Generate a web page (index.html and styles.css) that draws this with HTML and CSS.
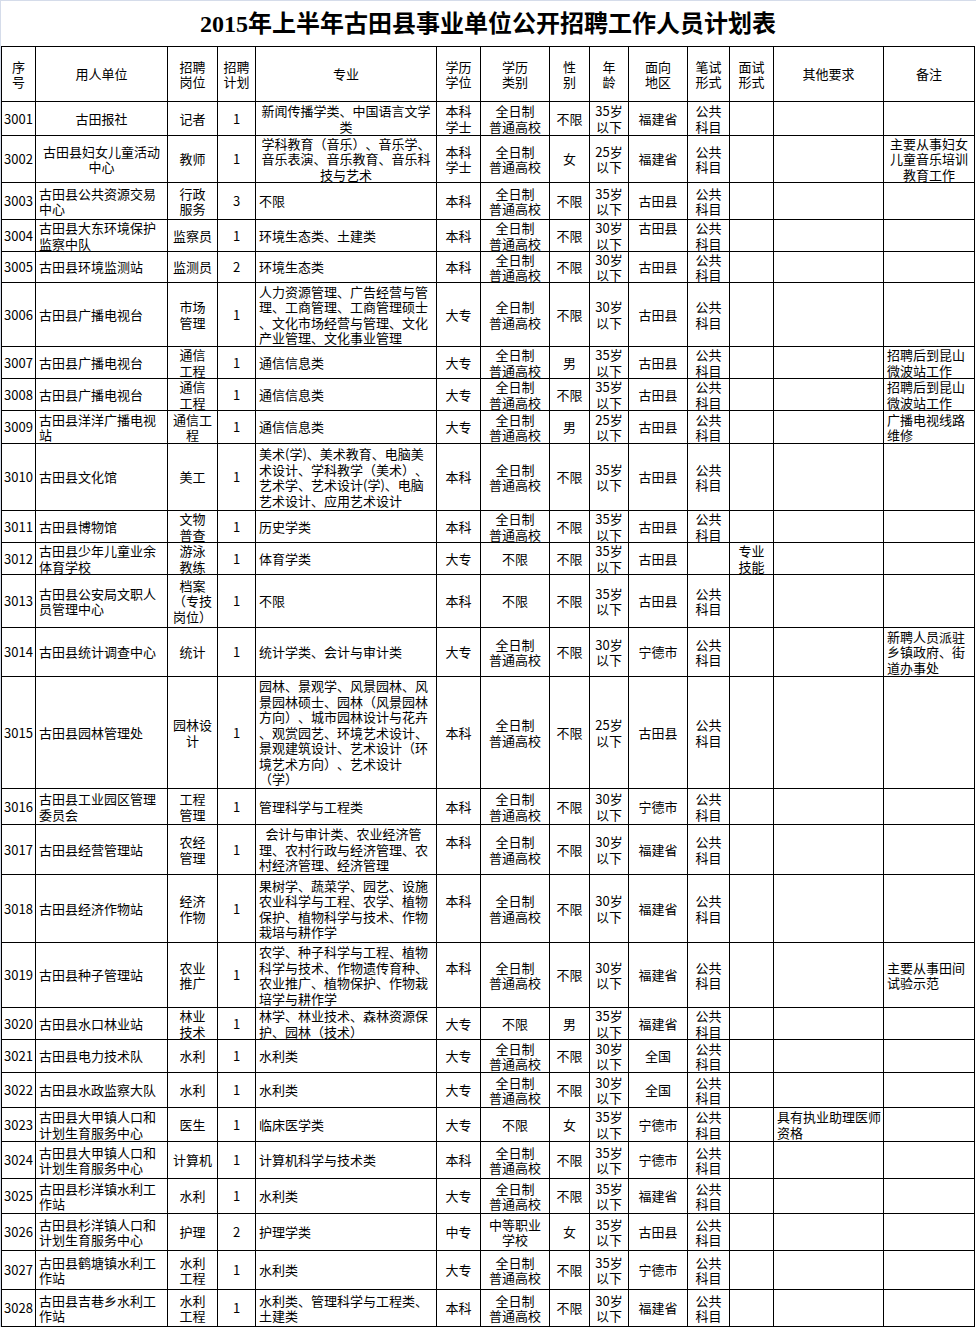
FILE: index.html
```html
<!DOCTYPE html>
<html lang="zh-CN">
<head>
<meta charset="utf-8">
<title>2015年上半年古田县事业单位公开招聘工作人员计划表</title>
<link rel="stylesheet" href="styles.css">
</head>
<body>
<div class="sheet">
<div class="title">2015年上半年古田县事业单位公开招聘工作人员计划表</div>
<div class="grid">
<div class="r hd"><div>序
号</div><div>用人单位</div><div>招聘
岗位</div><div>招聘
计划</div><div>专业</div><div>学历
学位</div><div>学历
类别</div><div>性
别</div><div>年
龄</div><div>面向
地区</div><div>笔试
形式</div><div>面试
形式</div><div>其他要求</div><div>备注</div></div>
<div class="r"><div>3001</div><div>古田报社</div><div>记者</div><div>1</div><div>新闻传播学类、中国语言文学
类</div><div>本科
学士</div><div>全日制
普通高校</div><div>不限</div><div>35岁
以下</div><div>福建省</div><div>公共
科目</div><div></div><div class="l"></div><div class="l"></div></div>
<div class="r"><div>3002</div><div>古田县妇女儿童活动
中心</div><div>教师</div><div>1</div><div>学科教育（音乐）、音乐学、
音乐表演、音乐教育、音乐科
技与艺术</div><div>本科
学士</div><div>全日制
普通高校</div><div>女</div><div>25岁
以下</div><div>福建省</div><div>公共
科目</div><div></div><div class="l"></div><div>主要从事妇女
儿童音乐培训
教育工作</div></div>
<div class="r"><div>3003</div><div class="l">古田县公共资源交易
中心</div><div>行政
服务</div><div>3</div><div class="l">不限</div><div>本科</div><div>全日制
普通高校</div><div>不限</div><div>35岁
以下</div><div>古田县</div><div>公共
科目</div><div></div><div class="l"></div><div class="l"></div></div>
<div class="r"><div>3004</div><div class="l">古田县大东环境保护
监察中队</div><div>监察员</div><div>1</div><div class="l">环境生态类、土建类</div><div>本科</div><div>全日制
普通高校</div><div>不限</div><div>30岁
以下</div><div class="t">古田县</div><div>公共
科目</div><div></div><div class="l"></div><div class="l"></div></div>
<div class="r"><div>3005</div><div class="l">古田县环境监测站</div><div>监测员</div><div>2</div><div class="l">环境生态类</div><div>本科</div><div>全日制
普通高校</div><div>不限</div><div>30岁
以下</div><div>古田县</div><div>公共
科目</div><div></div><div class="l"></div><div class="l"></div></div>
<div class="r"><div>3006</div><div class="l">古田县广播电视台</div><div>市场
管理</div><div>1</div><div class="l">人力资源管理、广告经营与管
理、工商管理、工商管理硕士
、文化市场经营与管理、文化
产业管理、文化事业管理</div><div>大专</div><div>全日制
普通高校</div><div>不限</div><div>30岁
以下</div><div>古田县</div><div>公共
科目</div><div></div><div class="l"></div><div class="l"></div></div>
<div class="r"><div>3007</div><div class="l">古田县广播电视台</div><div>通信
工程</div><div>1</div><div class="l">通信信息类</div><div>大专</div><div>全日制
普通高校</div><div>男</div><div>35岁
以下</div><div>古田县</div><div>公共
科目</div><div></div><div class="l"></div><div class="l">招聘后到昆山
微波站工作</div></div>
<div class="r"><div>3008</div><div class="l">古田县广播电视台</div><div>通信
工程</div><div>1</div><div class="l">通信信息类</div><div>大专</div><div>全日制
普通高校</div><div>不限</div><div>35岁
以下</div><div>古田县</div><div>公共
科目</div><div></div><div class="l"></div><div class="l">招聘后到昆山
微波站工作</div></div>
<div class="r"><div>3009</div><div class="l">古田县洋洋广播电视
站</div><div>通信工
程</div><div>1</div><div class="l">通信信息类</div><div>大专</div><div>全日制
普通高校</div><div>男</div><div>25岁
以下</div><div>古田县</div><div>公共
科目</div><div></div><div class="l"></div><div class="l">广播电视线路
维修</div></div>
<div class="r"><div>3010</div><div class="l">古田县文化馆</div><div>美工</div><div>1</div><div class="l">美术(学)、美术教育、电脑美
术设计、学科教学（美术）、
艺术学、艺术设计(学)、电脑
艺术设计、应用艺术设计</div><div>本科</div><div>全日制
普通高校</div><div>不限</div><div>35岁
以下</div><div>古田县</div><div>公共
科目</div><div></div><div class="l"></div><div class="l"></div></div>
<div class="r"><div>3011</div><div class="l">古田县博物馆</div><div>文物
普查</div><div>1</div><div class="l">历史学类</div><div>本科</div><div>全日制
普通高校</div><div>不限</div><div>35岁
以下</div><div>古田县</div><div>公共
科目</div><div></div><div class="l"></div><div class="l"></div></div>
<div class="r"><div>3012</div><div class="l">古田县少年儿童业余
体育学校</div><div>游泳
教练</div><div>1</div><div class="l">体育学类</div><div>大专</div><div>不限</div><div>不限</div><div>35岁
以下</div><div>古田县</div><div></div><div>专业
技能</div><div class="l"></div><div class="l"></div></div>
<div class="r"><div>3013</div><div class="l">古田县公安局文职人
员管理中心</div><div>档案
（专技
岗位）</div><div>1</div><div class="l">不限</div><div>本科</div><div>不限</div><div>不限</div><div>35岁
以下</div><div>古田县</div><div>公共
科目</div><div></div><div class="l"></div><div class="l"></div></div>
<div class="r"><div>3014</div><div class="l">古田县统计调查中心</div><div>统计</div><div>1</div><div class="l">统计学类、会计与审计类</div><div>大专</div><div>全日制
普通高校</div><div>不限</div><div>30岁
以下</div><div>宁德市</div><div>公共
科目</div><div></div><div class="l"></div><div class="l">新聘人员派驻
乡镇政府、街
道办事处</div></div>
<div class="r"><div>3015</div><div class="l">古田县园林管理处</div><div>园林设
计</div><div>1</div><div class="l">园林、景观学、风景园林、风
景园林硕士、园林（风景园林
方向）、城市园林设计与花卉
、观赏园艺、环境艺术设计、
景观建筑设计、艺术设计（环
境艺术方向）、艺术设计
（学）</div><div>本科</div><div>全日制
普通高校</div><div>不限</div><div>25岁
以下</div><div>古田县</div><div>公共
科目</div><div></div><div class="l"></div><div class="l"></div></div>
<div class="r"><div>3016</div><div class="l">古田县工业园区管理
委员会</div><div>工程
管理</div><div>1</div><div class="l">管理科学与工程类</div><div>本科</div><div>全日制
普通高校</div><div>不限</div><div>30岁
以下</div><div>宁德市</div><div>公共
科目</div><div></div><div class="l"></div><div class="l"></div></div>
<div class="r"><div>3017</div><div class="l">古田县经营管理站</div><div>农经
管理</div><div>1</div><div class="l">&ensp;会计与审计类、农业经济管
理、农村行政与经济管理、农
村经济管理、经济管理</div><div>本科
&nbsp;</div><div>全日制
普通高校</div><div>不限</div><div>30岁
以下</div><div>福建省</div><div>公共
科目</div><div></div><div class="l"></div><div class="l"></div></div>
<div class="r"><div>3018</div><div class="l">古田县经济作物站</div><div>经济
作物</div><div>1</div><div class="l">果树学、蔬菜学、园艺、设施
农业科学与工程、农学、植物
保护、植物科学与技术、作物
栽培与耕作学</div><div>本科
&nbsp;</div><div>全日制
普通高校</div><div>不限</div><div>30岁
以下</div><div>福建省</div><div>公共
科目</div><div></div><div class="l"></div><div class="l"></div></div>
<div class="r"><div>3019</div><div class="l">古田县种子管理站</div><div>农业
推广</div><div>1</div><div class="l">农学、种子科学与工程、植物
科学与技术、作物遗传育种、
农业推广、植物保护、作物栽
培学与耕作学</div><div>本科
&nbsp;</div><div>全日制
普通高校</div><div>不限</div><div>30岁
以下</div><div>福建省</div><div>公共
科目</div><div></div><div class="l"></div><div class="l">主要从事田间
试验示范</div></div>
<div class="r"><div>3020</div><div class="l">古田县水口林业站</div><div>林业
技术</div><div>1</div><div class="l">林学、林业技术、森林资源保
护、园林（技术）</div><div>大专</div><div>不限</div><div>男</div><div>35岁
以下</div><div>福建省</div><div>公共
科目</div><div></div><div class="l"></div><div class="l"></div></div>
<div class="r"><div>3021</div><div class="l">古田县电力技术队</div><div>水利</div><div>1</div><div class="l">水利类</div><div>大专</div><div>全日制
普通高校</div><div>不限</div><div>30岁
以下</div><div>全国</div><div>公共
科目</div><div></div><div class="l"></div><div class="l"></div></div>
<div class="r"><div>3022</div><div class="l">古田县水政监察大队</div><div>水利</div><div>1</div><div class="l">水利类</div><div>大专</div><div>全日制
普通高校</div><div>不限</div><div>30岁
以下</div><div>全国</div><div>公共
科目</div><div></div><div class="l"></div><div class="l"></div></div>
<div class="r"><div>3023</div><div class="l">古田县大甲镇人口和
计划生育服务中心</div><div>医生</div><div>1</div><div class="l">临床医学类</div><div>大专</div><div>不限</div><div>女</div><div>35岁
以下</div><div>宁德市</div><div>公共
科目</div><div></div><div class="l">具有执业助理医师
资格</div><div class="l"></div></div>
<div class="r"><div>3024</div><div class="l">古田县大甲镇人口和
计划生育服务中心</div><div>计算机</div><div>1</div><div class="l">计算机科学与技术类</div><div>本科</div><div>全日制
普通高校</div><div>不限</div><div>35岁
以下</div><div>宁德市</div><div>公共
科目</div><div></div><div class="l"></div><div class="l"></div></div>
<div class="r"><div>3025</div><div class="l">古田县杉洋镇水利工
作站</div><div>水利</div><div>1</div><div class="l">水利类</div><div>大专</div><div>全日制
普通高校</div><div>不限</div><div>35岁
以下</div><div>福建省</div><div>公共
科目</div><div></div><div class="l"></div><div class="l"></div></div>
<div class="r"><div>3026</div><div class="l">古田县杉洋镇人口和
计划生育服务中心</div><div>护理</div><div>2</div><div class="l">护理学类</div><div>中专</div><div>中等职业
学校</div><div>女</div><div>35岁
以下</div><div>古田县</div><div>公共
科目</div><div></div><div class="l"></div><div class="l"></div></div>
<div class="r"><div>3027</div><div class="l">古田县鹤塘镇水利工
作站</div><div>水利
工程</div><div>1</div><div class="l">水利类</div><div>大专</div><div>全日制
普通高校</div><div>不限</div><div>35岁
以下</div><div>宁德市</div><div>公共
科目</div><div></div><div class="l"></div><div class="l"></div></div>
<div class="r"><div>3028</div><div class="l">古田县吉巷乡水利工
作站</div><div>水利
工程</div><div>1</div><div class="l">水利类、管理科学与工程类、
土建类</div><div>本科</div><div>全日制
普通高校</div><div>不限</div><div>30岁
以下</div><div>福建省</div><div>公共
科目</div><div></div><div class="l"></div><div class="l"></div></div>
</div>
</div>
</body>
</html>
```
FILE: styles.css
```css
html, body {
  margin: 0;
  padding: 0;
  background: #fff;
}

.sheet {
  width: 975px;
  border-top: 1px solid #d5dcea;
  border-left: 1px solid #d5dcea;
  font-family: "Noto Sans CJK SC", sans-serif;
  color: #000;
  text-spacing-trim: space-all;
}

.title {
  width: 974px;
  height: 45px;
  display: flex;
  align-items: center;
  justify-content: center;
  font-family: "Liberation Serif", "Noto Sans CJK SC", serif;
  font-weight: 700;
  font-size: 24px;
  line-height: 1;
  padding-top: 1px;
  box-sizing: border-box;
}

.grid {
  width: 974px;
  box-sizing: border-box;
  display: grid;
  grid-template-columns: 33px 131px 49px 37px 180px 43px 68px 39px 38px 58px 41px 43px 109px 90px;
  grid-template-rows: 54px 33px 46px 36px 31px 30px 63px 31px 31px 32px 66px 31px 31px 52px 48px 111px 35px 49px 67px 64px 31px 32px 34px 33px 36px 34px 36px 38px 36px;
  gap: 1px;
  padding: 1px;
  background: #000;
  font-size: 13px;
  line-height: 15.5px;
}

.r {
  display: contents;
}

.r > div {
  background: #fff;
  display: flex;
  flex-direction: column;
  justify-content: center;
  align-items: center;
  text-align: center;
  padding: 0 3px;
  white-space: pre;
  min-width: 0;
  min-height: 0;
}

.r > div.l {
  align-items: flex-start;
  text-align: left;
}

.r > div.t {
  justify-content: flex-start;
}
```
